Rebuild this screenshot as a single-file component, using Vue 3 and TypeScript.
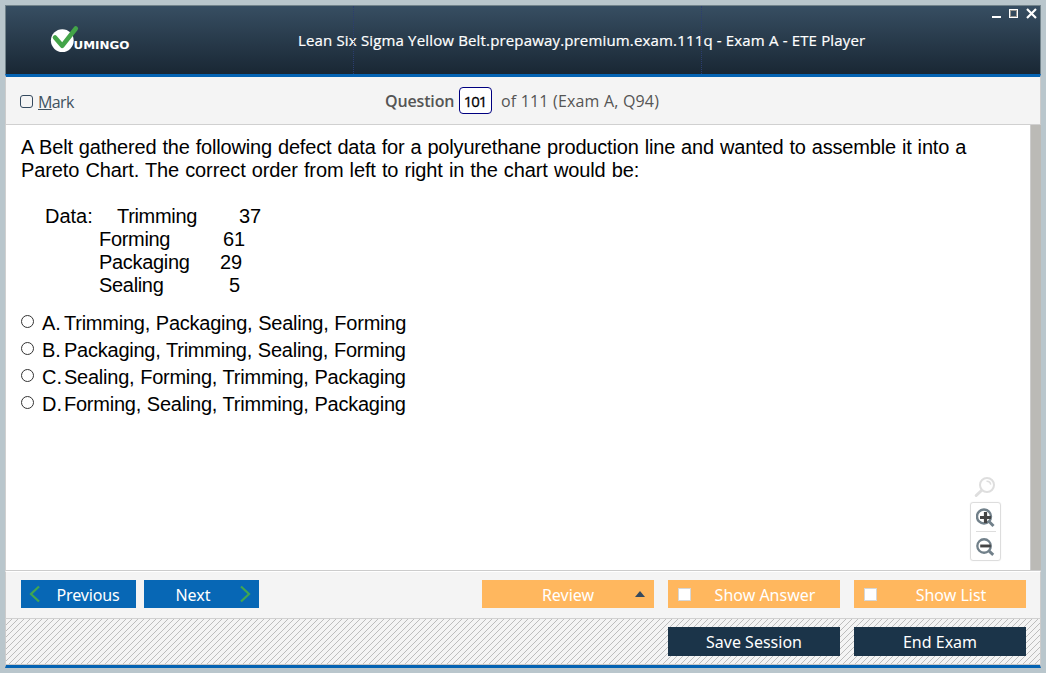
<script setup lang="ts">
import { ref } from 'vue'

interface Answer { key: string; text: string }

const answers: Answer[] = [
  { key: 'A.', text: 'Trimming, Packaging, Sealing, Forming' },
  { key: 'B.', text: 'Packaging, Trimming, Sealing, Forming' },
  { key: 'C.', text: 'Sealing, Forming, Trimming, Packaging' },
  { key: 'D.', text: 'Forming, Sealing, Trimming, Packaging' },
]
const selected = ref<string>('')
const marked = ref<boolean>(false)
const showAnswer = ref<boolean>(false)
const showList = ref<boolean>(false)
</script>

<template>
  <div class="desktop">
    <div class="window">
      <header class="titlebar">
        <i class="guide guide-a"></i><i class="guide guide-b"></i>
        <svg class="logo" width="90" height="40" viewBox="0 0 90 40">
          <circle cx="17.3" cy="20.6" r="11.4" fill="#fff" />
          <path d="M10 17.5 L17.2 25.8 L30.8 8.5" fill="none" stroke="#43a448" stroke-width="4.6" stroke-linecap="round" stroke-linejoin="round" />
          <text class="brand" x="28.5" y="29" textLength="56" lengthAdjust="spacingAndGlyphs">UMINGO</text>
        </svg>
        <h1 class="title"><span>Lean Six Sigma Yellow Belt.prepaway.premium.exam.111q - Exam A - ETE Player</span></h1>
        <svg class="controls" width="48" height="16" viewBox="0 0 48 16" shape-rendering="crispEdges">
          <path d="M2 11h9v2H2z" fill="#fff" />
          <path d="M19.5 4.5h8v8h-8z" fill="none" stroke="#fff" />
          <path d="M20.5 5.5h6v6h-6z" fill="none" stroke="#999690" />
          <path d="M37 4L46 13M46 4L37 13" stroke="#fff" stroke-width="2.2" shape-rendering="auto" />
        </svg>
      </header>
      <section class="infobar">
        <label class="mark"><input v-model="marked" type="checkbox" class="markbox" /><span class="marktext"><u>M</u>ark</span></label>
        <b class="qword">Question</b>
        <span class="qnum">101</span>
        <span class="qtotal">of 111 (Exam A, Q94)</span>
      </section>
      <main class="content">
        <div class="question">
          <p class="l1">A Belt gathered the following defect data for a polyurethane production line and wanted to assemble it into a</p>
          <p class="l2">Pareto Chart. The correct order from left to right in the chart would be:</p>
          <div class="data">
            <div class="drow"><span class="dlabel">Data:</span><span class="dname first">Trimming</span><span class="n37">37</span></div>
            <div class="drow"><span class="dlabel"></span><span class="dname">Forming</span><span class="n61">61</span></div>
            <div class="drow"><span class="dlabel"></span><span class="dname">Packaging</span><span class="n29">29</span></div>
            <div class="drow"><span class="dlabel"></span><span class="dname">Sealing</span><span class="n5">5</span></div>
          </div>
          <label v-for="a in answers" :key="a.key" class="answer">
            <input v-model="selected" type="radio" name="answer" :value="a.key" class="radio" />
            <span class="key">{{ a.key }}</span><span class="atext">{{ a.text }}</span>
          </label>
        </div>
        <div class="scroll"></div>
        <div class="zoomer">
          <svg class="lens" width="22" height="22" viewBox="0 0 22 22">
            <path d="M8 14L2.2 19.5" stroke="#dedede" stroke-width="3" stroke-linecap="round" />
            <circle cx="13" cy="9" r="7" fill="#fff" stroke="#dedede" stroke-width="2" />
            <path d="M12.5 5.2a4 4 0 0 1 4.2 3.5" fill="none" stroke="#dedede" stroke-width="1.5" />
          </svg>
          <div class="zoombox">
            <svg width="20" height="28" viewBox="0 0 20 28">
              <circle cx="8" cy="13.5" r="7" fill="none" stroke="#71808a" stroke-width="2.4" />
              <path d="M13.3 18.8L17.5 23" stroke="#71808a" stroke-width="3" />
              <path d="M9.5 9v11M4 14.5h11" stroke="#444" stroke-width="3.2" />
            </svg>
            <svg class="minus" width="20" height="28" viewBox="0 0 20 28">
              <circle cx="8" cy="14.5" r="7" fill="none" stroke="#71808a" stroke-width="2.4" />
              <path d="M13.3 19.8L17.5 23.7" stroke="#71808a" stroke-width="3" />
              <path d="M4 14.5h11" stroke="#444" stroke-width="3" />
            </svg>
          </div>
        </div>
      </main>
      <nav class="navbar">
        <button class="btn blue"><svg class="chev" width="12" height="18" viewBox="0 0 12 18"><path d="M10 1.5L2 9l8 7.5" /></svg><span class="prev">Previous</span></button>
        <button class="btn blue next"><span class="nexttext">Next</span><svg class="chev right" width="12" height="18" viewBox="0 0 12 18"><path d="M2 1.5L10 9l-8 7.5" /></svg></button>
        <button class="btn orange review"><span>Review</span><svg class="tri" width="10" height="6" viewBox="0 0 10 6"><path d="M0 6L5 0l5 6z" fill="#34495e" /></svg></button>
        <label class="btn orange"><input v-model="showAnswer" type="checkbox" class="box" /><span class="withbox">Show Answer</span></label>
        <label class="btn orange"><input v-model="showList" type="checkbox" class="box" /><span class="withbox list">Show List</span></label>
      </nav>
      <footer class="hatch">
        <svg class="lines" width="1034" height="45"><defs><pattern id="stripe" width="6" height="6" patternUnits="userSpaceOnUse"><path d="M5 0h1v1h-1zM4 1h1v1h-1zM3 2h1v1h-1zM2 3h1v1h-1zM1 4h1v1h-1zM0 5h1v1h-1z" fill="#bdbdbd" /></pattern></defs><rect width="1034" height="45" fill="url(#stripe)" /></svg>
        <button class="btn dark"><span>Save Session</span></button>
        <button class="btn dark end"><span>End Exam</span></button>
      </footer>
    </div>
  </div>
</template>

<style>
html, body { margin: 0; overflow: hidden; }
</style>

<style scoped>
* { box-sizing: border-box; }
p, h1 { margin: 0; }
button { border: 0; padding: 0; }
input { appearance: none; margin: 0; flex: none; }
.desktop { width: 1046px; height: 673px; padding: 5px; background: #b9c6cc; overflow: hidden; }
.window { width: 1036px; height: 663px; display: flex; flex-direction: column; white-space: nowrap; }
.titlebar { position: relative; height: 69px; flex: none; background: linear-gradient(#374e62, #192734); border: 1px solid #72838b; border-bottom: 0; }
.logo { position: absolute; left: 39px; top: 14px; }
.brand { font: bold 10px "DejaVu Sans", sans-serif; fill: #fff; }
.guide { position: absolute; top: 0; bottom: 0; border-left: 1px dotted #2b3d70; }
.guide-a { left: 347px; }
.guide-b { left: 695px; }
.title { font: 500 15px/22px "Open Sans", sans-serif; color: #fff; padding: 23px 0 0 292px; letter-spacing: 0.16px; -webkit-text-stroke: 0.2px #fff; }
.controls { position: absolute; right: 2px; top: -1px; }
.infobar { height: 51px; flex: none; border-top: 3px solid #0463b3; border-left: 1px solid #ccc; border-right: 1px solid #ccc; border-bottom: 1px solid #d0d0d0; background: #f4f4f4; display: flex; font: 16px/22px "Open Sans", sans-serif; color: #555; }
.mark { display: flex; color: #40525f; width: 379px; }
.markbox { width: 13px; height: 13px; border: 1px solid #34495e; border-radius: 3px; margin: 18px 5px 0 14px; }
.marktext { padding-top: 14px; letter-spacing: -0.6px; }
.qword { padding-top: 13px; width: 75px; font-weight: 600; letter-spacing: -0.15px; }
.qnum { width: 33px; height: 27px; border: 1px solid #000080; border-radius: 4px; background: #fff; margin: 10px 9px 0 -1px; color: #000; text-align: center; line-height: 27px; font-size: 15px; font-weight: 500; letter-spacing: -1px; padding-right: 1px; -webkit-text-stroke: 0.3px #000; }
.qtotal { padding-top: 13px; letter-spacing: 0.18px; }
.content { position: relative; height: 446px; flex: none; display: flex; background: #fff; border-left: 1px solid #d0d0d0; border-bottom: 1px solid #ccc; }
.question { flex: 1; padding: 11px 0 0 15px; font: 20px/23px "Liberation Sans", Arial, sans-serif; color: #000; }
.l1 { letter-spacing: -0.17px; word-spacing: 0.6px; }
.l2 { letter-spacing: -0.1px; word-spacing: 0.6px; }
.data { padding: 23px 0 13px 24px; }
.drow { display: flex; }
.dlabel { width: 54px; }
.dname { width: 124px; letter-spacing: -0.32px; }
.first { padding-left: 18px; width: 140px; }
.n61 { margin-left: 0; }
.n29 { margin-left: -3px; }
.n5 { margin-left: 6px; }
.answer { display: flex; height: 27px; line-height: 27px; }
.radio { width: 13px; height: 13px; border: 1px solid #333; border-radius: 50%; margin-top: 5px; }
.key { width: 22px; margin-left: 8px; }
.atext { letter-spacing: -0.24px; word-spacing: 0.5px; }
.scroll { width: 11px; background: #bbbab6; border-left: 1px solid #ccc; }
.zoomer { position: absolute; left: 964px; top: 351px; }
.lens { display: block; margin-left: 4px; }
.zoombox { margin-top: 4px; width: 31px; height: 59px; border: 1px solid #ddd; box-shadow: 0 0 1px #ddd; border-radius: 3px; padding: 0 5px; }
.zoombox svg { display: block; }
.minus { border-top: 1px solid #ddd; }
.navbar { height: 48px; flex: none; background: #f4f4f4; border-top: 1px solid #fff; border-bottom: 1px solid #d0d0d0; border-left: 1px solid #ccc; border-right: 1px solid #ccc; display: flex; padding: 8px 14px 0 15px; gap: 14px; }
.btn { display: flex; align-items: center; justify-content: center; position: relative; width: 172px; height: 28px; color: #fff; font: 16px/28px "Noto Sans", sans-serif; flex: none; }
.blue, .orange { padding-top: 2px; }
.blue { width: 115px; background: #0767b5; }
.next { margin-left: -6px; }
.prev { margin-left: 19px; letter-spacing: -0.15px; }
.nexttext { margin-right: 17px; }
.chev { position: absolute; left: 8px; top: 5px; fill: none; stroke: #41a650; stroke-width: 2.2; }
.right { left: auto; right: 8px; }
.orange { background: #ffb75e; }
.review { margin-left: auto; }
.tri { position: absolute; right: 9px; top: 11px; }
.box { position: absolute; left: 10px; top: 8px; width: 13px; height: 13px; background: #fff; border: 1px solid #d6d6d6; }
.withbox { margin-left: 22px; }
.hatch { position: relative; height: 49px; flex: none; background: #f4f4f4; border-bottom: 3px solid #0463b3; border-left: 1px solid #ccc; border-right: 1px solid #ccc; box-shadow: inset 0 -1px #c8c8c8; display: flex; justify-content: flex-end; gap: 14px; padding: 8px 14px 0 0; }
.lines { position: absolute; left: 0; top: 0; }
.dark { background: #1b3449; height: 29px; }
</style>
